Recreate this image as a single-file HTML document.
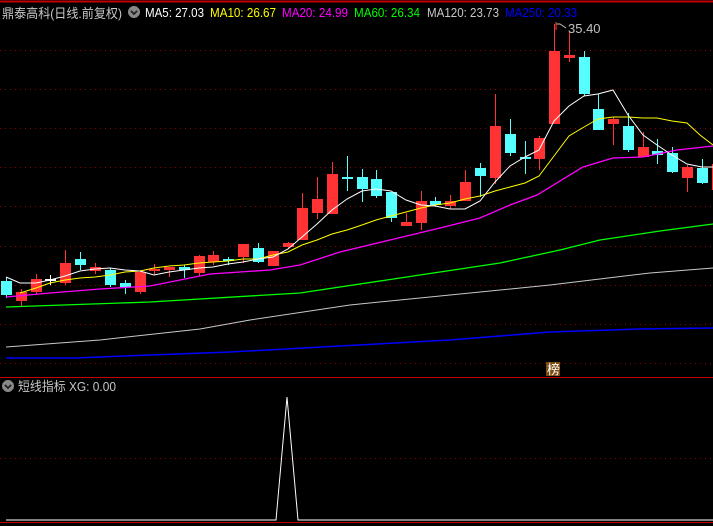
<!DOCTYPE html>
<html><head><meta charset="utf-8"><style>
html,body{margin:0;padding:0;background:#000;width:713px;height:526px;overflow:hidden}
svg{display:block}
text{font-family:"Liberation Sans","Noto Sans CJK SC",sans-serif;font-size:13px}
</style></head><body>
<svg id="s" width="713" height="526" xmlns="http://www.w3.org/2000/svg" shape-rendering="crispEdges">
<rect width="713" height="526" fill="#000"/>
<line x1="0" y1="1.5" x2="713" y2="1.5" stroke="#c00000" stroke-width="2"/>
<g stroke="#8b0000" stroke-dasharray="1,4" stroke-width="1">
<line x1="0" y1="50.5" x2="713" y2="50.5"/><line x1="0" y1="89.5" x2="713" y2="89.5"/>
<line x1="0" y1="128.5" x2="713" y2="128.5"/><line x1="0" y1="167.5" x2="713" y2="167.5"/>
<line x1="0" y1="206.5" x2="713" y2="206.5"/><line x1="0" y1="246.5" x2="713" y2="246.5"/>
<line x1="0" y1="285.5" x2="713" y2="285.5"/><line x1="0" y1="324.5" x2="713" y2="324.5"/>
<line x1="0" y1="363.5" x2="713" y2="363.5"/><line x1="0" y1="458.5" x2="713" y2="458.5"/>
</g>
<line x1="0" y1="377.5" x2="713" y2="377.5" stroke="#c00000" stroke-width="1"/>
<line x1="0" y1="522.5" x2="713" y2="522.5" stroke="#c00000" stroke-width="1"/>
<g id="c"></g>
<g fill="none" stroke-width="1" shape-rendering="auto">
<polyline stroke="#0000ff" stroke-width="1.5" points="6,358 75,358 150,355 230,352 340,346 450,340 550,332 640,329 713,328"/>
<polyline stroke="#c8c8c8" points="6,347 100,340 200,329 250,320 350,305 450,295 550,285 650,273 713,268"/>
<polyline stroke="#00ff00" stroke-width="1.3" points="6,307 150,302 300,293 400,278 500,263 560,250 600,240 660,231 713,224"/>
<polyline stroke="#ff00ff" stroke-width="1.3" points="6,297 50,293 100,289 150,286 210,274 270,270 300,265 340,252 390,240 440,228 480,218 510,205 537,195 583,167 613,158 643,157 677,150 713,146"/>
<polyline stroke="#ffff00" points="20,293 36,288 50,283 65,280 80,278 95,277 110,275 125,272 140,271 154,268 169,266 184,265 199,263 213,262 228,261 243,259 258,259 273,255 288,252 302,245 317,240 332,234 347,230 362,225 376,220 391,216 406,212 421,208 435,205 450,203 465,199 480,196 495,191 510,187 525,183 539,176 554,156 569,136 584,127 598,119 613,117 628,117 643,118 657,118 672,121 687,123 700,135 713,145"/>
<polyline stroke="#ffffff" points="6,277 20,283 36,283 50,280 65,276 80,271 95,269 110,268 125,270 140,271 154,275 169,272 184,270 199,268 213,267 228,264 243,262 258,259 273,257 288,249 302,237 317,224 332,210 347,199 362,191 376,189 391,191 406,200 421,205 435,206 450,209 465,209 480,201 495,182 510,166 525,157 539,150 554,121 569,106 584,96 598,94 613,90 628,115 643,135 657,145 672,155 687,164 702,167 713,167"/>
<polyline stroke="#ffffff" points="6,520 276,520 287,397 298,520 713,520"/>
</g>
<polyline fill="none" stroke="#c0c0c0" points="556,24 560,24 566,28" shape-rendering="auto"/>
<line x1="556" y1="22" x2="556" y2="30" stroke="#ff3333"/>
<text x="568" y="33" fill="#c0c0c0" font-size="12">35.40</text>
<rect x="546" y="362" width="14" height="14" fill="#7a4a10"/>
<text x="547" y="374" fill="#fff" font-size="12">榜</text>
<text x="2" y="18" fill="#c8c8c8" font-size="14" textLength="120" lengthAdjust="spacingAndGlyphs">鼎泰高科(日线.前复权)</text>
<circle cx="134" cy="12" r="6" fill="#888"/><polyline points="131,11 134,14 137,11" fill="none" stroke="#222" stroke-width="1.5"/>
<text x="145" y="17" fill="#fff" textLength="59" lengthAdjust="spacingAndGlyphs">MA5: 27.03</text>
<text x="210" y="17" fill="#ffff00" textLength="66" lengthAdjust="spacingAndGlyphs">MA10: 26.67</text>
<text x="282" y="17" fill="#ff00ff" textLength="66" lengthAdjust="spacingAndGlyphs">MA20: 24.99</text>
<text x="354" y="17" fill="#00ff00" textLength="66" lengthAdjust="spacingAndGlyphs">MA60: 26.34</text>
<text x="427" y="17" fill="#c8c8c8" textLength="72" lengthAdjust="spacingAndGlyphs">MA120: 23.73</text>
<text x="505" y="17" fill="#0000ff" textLength="72" lengthAdjust="spacingAndGlyphs">MA250: 20.33</text>
<circle cx="8" cy="386" r="6" fill="#888"/><polyline points="5,385 8,388 11,385" fill="none" stroke="#222" stroke-width="1.5"/>
<text x="18" y="391" fill="#c8c8c8" textLength="98" lengthAdjust="spacingAndGlyphs">短线指标 XG: 0.00</text>
</svg>
<script>
var d=[
[6,'c',281,295,277,298],[21,'r',292,301,289,306],[36,'r',279,292,274,294],[50,'w',279,279,275,285],
[65,'r',263,283,250,285],[80,'c',259,265,252,270],[95,'r',267,271,263,274],[110,'c',270,285,268,287],
[125,'c',283,287,280,294],[140,'r',272,292,270,294],[154,'r',269,271,264,275],[169,'r',267,270,267,277],
[184,'c',267,270,265,278],[199,'r',256,273,255,276],[213,'r',255,262,251,265],[228,'x',259,259,257,265],
[243,'r',244,257,244,263],[258,'c',248,262,243,263],[273,'r',251,266,251,266],[288,'r',243,247,242,249],
[302,'r',208,240,193,240],[317,'r',199,213,177,219],[332,'r',174,214,162,214],[347,'x',177,178,156,191],
[362,'c',177,189,169,202],[376,'c',179,196,170,198],[391,'c',192,218,192,222],[406,'r',222,226,213,226],
[421,'r',201,223,191,230],[435,'c',201,205,197,206],[450,'r',201,206,195,209],[465,'r',182,201,170,201],
[480,'c',168,176,163,197],[495,'r',126,178,94,184],[510,'c',134,153,119,156],[525,'x',157,157,141,174],
[539,'r',138,159,136,170],[554,'r',51,124,24,124],[569,'r',55,58,32,62],[584,'c',57,94,51,96],
[598,'c',109,130,94,130],[613,'r',119,124,117,145],[628,'c',126,150,113,152],[643,'r',147,157,132,157],
[657,'c',151,155,139,164],[672,'c',153,172,147,173],[687,'r',167,178,165,192],[702,'c',168,183,159,184],
[717,'r',164,190,160,192]];
var h='';
d.forEach(function(e){var x=e[0],t=e[1],col=t=='r'?'#ff3333':(t=='w'?'#ffffff':'#55ffff');
h+='<line x1="'+(x+.5)+'" y1="'+e[4]+'" x2="'+(x+.5)+'" y2="'+e[5]+'" stroke="'+col+'"/>';
var hh=Math.max(e[3]-e[2],1);
if(t=='w'||t=='x')h+='<rect x="'+(x-5)+'" y="'+e[2]+'" width="11" height="2" fill="'+col+'"/>';
else h+='<rect x="'+(x-5)+'" y="'+e[2]+'" width="11" height="'+hh+'" fill="'+col+'"/>';});
document.getElementById('c').innerHTML=h;
</script>
</body></html>
